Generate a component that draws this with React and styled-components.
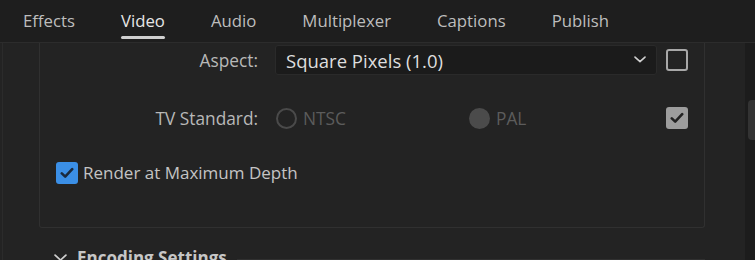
import styled, { createGlobalStyle } from 'styled-components';

const Global = createGlobalStyle`
  html, body { margin: 0; padding: 0; background: #232323; }
  body { font-family: "Open Sans", "Noto Sans", sans-serif; }
`;

const Screen = styled.div`
  width: 755px;
  height: 260px;
  overflow: hidden;
  display: flex;
  flex-direction: column;
  background: #232323;
`;

const TabBar = styled.div`
  height: 42px;
  flex: none;
  display: flex;
  align-items: stretch;
  padding-left: 23px;
  gap: 46px;
  background: #1e1e1e;
  border-bottom: 1px solid #2c2c2c;
`;

const Tab = styled.div`
  position: relative;
  display: flex;
  align-items: center;
  padding-bottom: 1px;
  font-size: 16.75px;
  color: ${p => (p.$active ? '#e6e6e6' : '#bdbdbd')};
  &::after {
    content: '';
    display: ${p => (p.$active ? 'block' : 'none')};
    position: absolute;
    left: 0;
    right: 0;
    bottom: 3px;
    height: 3px;
    border-radius: 2px;
    background: #cfcfcf;
  }
`;

const Body = styled.div`
  flex: 1;
  display: flex;
`;

const Gutter = styled.div`
  width: 36px;
  flex: none;
  border-left: 1px solid #2b2b2b;
  margin-left: 2px;
`;

const Column = styled.div`
  width: 666px;
  flex: none;
  display: flex;
  flex-direction: column;
`;

const Panel = styled.div`
  height: 185px;
  flex: none;
  box-sizing: border-box;
  border: 1px solid #303030;
  border-top: none;
  border-radius: 0 0 3px 3px;
  padding-top: 2px;
  display: flex;
  flex-direction: column;
`;

const Grid = styled.div`
  display: grid;
  grid-template-columns: 218px 382px 22px;
  column-gap: 17px;
  align-items: center;
`;

const FieldRow = styled(Grid)`
  height: ${p => p.$h}px;
`;

const Label = styled.div`
  text-align: right;
  font-size: 17.3px;
  color: #b8b8b8;
`;

const Select = styled.div`
  height: 30px;
  box-sizing: border-box;
  display: flex;
  align-items: center;
  justify-content: space-between;
  padding: 0 10px 0 10px;
  background: #1b1b1b;
  border: 1px solid #2a2a2a;
  border-radius: 3px;
  font-size: 18.5px;
  color: #dedede;
`;

const Box = styled.div`
  width: 22px;
  height: 22px;
  box-sizing: border-box;
  border-radius: 3px;
  display: flex;
  align-items: center;
  justify-content: center;
  border: ${p => (p.$checked ? 'none' : '2.5px solid #a8a8a8')};
  background: ${p => (p.$checked ? p.$color : 'transparent')};
  margin-left: ${p => p.$shift || 0}px;
`;

const Radios = styled.div`
  display: grid;
  grid-template-columns: 193px 1fr;
  align-items: center;
  padding-left: 1px;
`;

const Radio = styled.div`
  display: flex;
  align-items: center;
  gap: 6px;
  font-size: 17.3px;
  color: #5c5c5c;
  &::before {
    content: '';
    width: 21px;
    height: 21px;
    box-sizing: border-box;
    border-radius: 50%;
    border: ${p => (p.$filled ? 'none' : '2px solid #4a4a4a')};
    background: ${p => (p.$filled ? '#4b4b4b' : 'transparent')};
  }
`;

const CheckLine = styled.div`
  display: flex;
  align-items: center;
  gap: 5px;
  padding: 0 0 0 16px;
  font-size: 17px;
  color: #c4c4c4;
`;

const SectionHead = styled.div`
  display: flex;
  align-items: center;
  gap: 10px;
  padding: 18px 0 0 15px;
  font-size: 17px;
  font-weight: 700;
  color: #c6c6c6;
  &::after {
    content: '';
    flex: 1;
    height: 1px;
    background: #303030;
    margin-top: 4px;
  }
`;

const RightGutter = styled.div`
  width: 40px;
  flex: none;
`;

const Track = styled.div`
  width: 10px;
  flex: none;
  background: #1c1c1c;
  padding-top: 57px;
  display: flex;
  justify-content: flex-end;
`;

const Thumb = styled.div`
  width: 7px;
  height: 40px;
  border-radius: 4px 0 0 4px;
  background: #333333;
`;

const Check = ({ color }) => (
  <svg width="14" height="12" viewBox="0 0 14 12">
    <path d="M1.8 6.4 L5.2 9.6 L12.2 2.2" fill="none" stroke={color} strokeWidth="2.6" strokeLinecap="round" strokeLinejoin="round" />
  </svg>
);

const Chevron = ({ size = 12, color = '#cfcfcf' }) => (
  <svg width={size} height={size * 0.6} viewBox="0 0 12 7">
    <path d="M1 1 L6 5.5 L11 1" fill="none" stroke={color} strokeWidth="1.6" strokeLinecap="round" strokeLinejoin="round" />
  </svg>
);

const tabs = ['Effects', 'Video', 'Audio', 'Multiplexer', 'Captions', 'Publish'];

export default function App() {
  return (
    <Screen>
      <Global />
      <TabBar>
        {tabs.map(t => (
          <Tab key={t} $active={t === 'Video'}>{t}</Tab>
        ))}
      </TabBar>
      <Body>
        <Gutter />
        <Column>
          <Panel>
            <FieldRow $h={30}>
              <Label>Aspect:</Label>
              <Select>
                <span>Square Pixels (1.0)</span>
                <Chevron />
              </Select>
              <Box $shift={-8} />
            </FieldRow>
            <FieldRow $h={86}>
              <Label>TV Standard:</Label>
              <Radios>
                <Radio>NTSC</Radio>
                <Radio $filled>PAL</Radio>
              </Radios>
              <Box $shift={-8} $checked $color="#9d9d9d">
                <Check color="#222" />
              </Box>
            </FieldRow>
            <CheckLine>
              <Box $checked $color="#3b8fe6">
                <Check color="#1a2a3e" />
              </Box>
              Render at Maximum Depth
            </CheckLine>
          </Panel>
          <SectionHead>
            <Chevron size={13} />
            Encoding Settings
          </SectionHead>
        </Column>
        <RightGutter />
        <Track>
          <Thumb />
        </Track>
      </Body>
    </Screen>
  );
}
